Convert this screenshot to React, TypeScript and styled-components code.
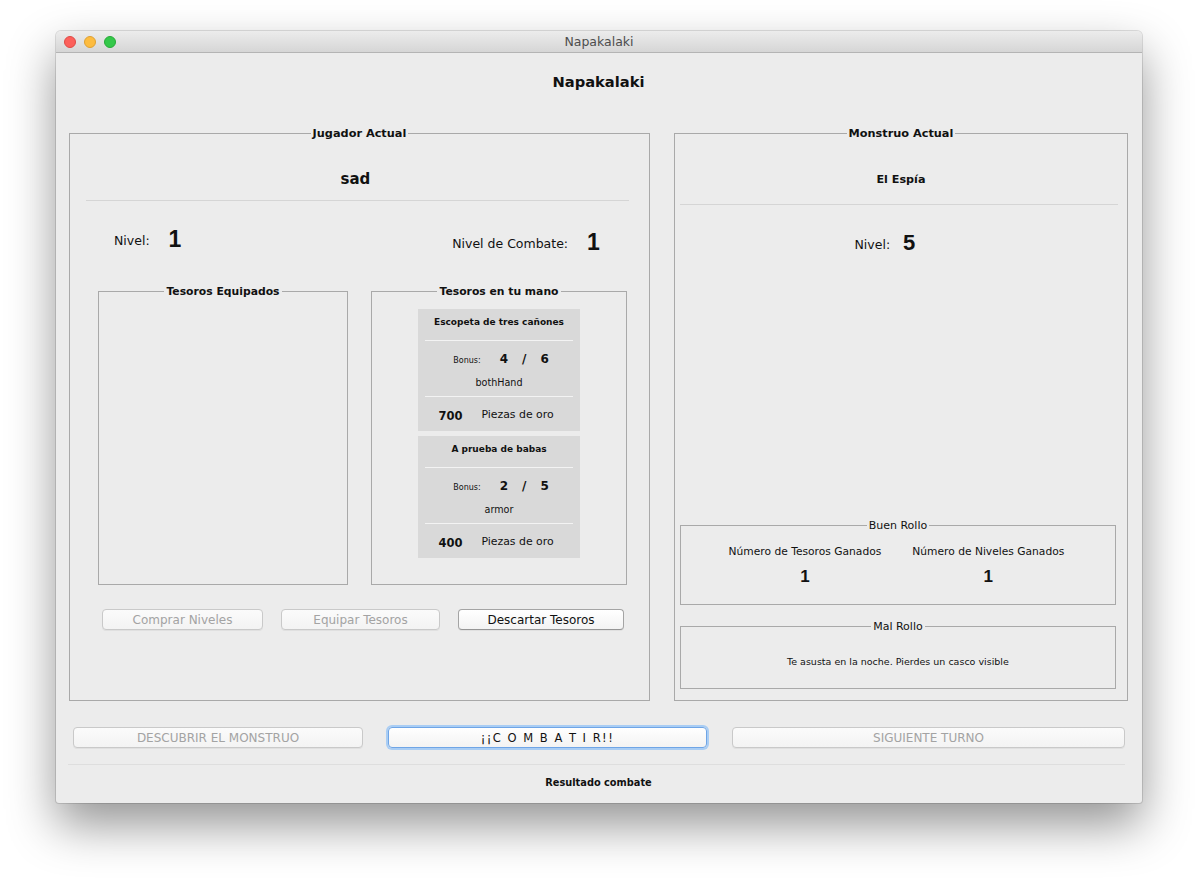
import React from "react";
import styled, { createGlobalStyle } from "styled-components";

const GlobalStyle = createGlobalStyle`
  html, body {
    margin: 0;
    padding: 0;
    background: #ffffff;
  }
  body {
    font-family: "DejaVu Sans", "Liberation Sans", sans-serif;
    color: #111111;
  }
`;

const Desktop = styled.div`
  width: 1198px;
  height: 884px;
  box-sizing: border-box;
  padding: 31px 0 0 56px;
  background: #ffffff;
  overflow: hidden;
`;

const Window = styled.div`
  width: 1086px;
  height: 772px;
  display: flex;
  flex-direction: column;
  border-radius: 5px 5px 3px 3px;
  background: #ececec;
  box-shadow: 0 22px 48px rgba(0, 0, 0, 0.42), 0 0 0 1px rgba(0, 0, 0, 0.12);
  overflow: hidden;
`;

const TitleBar = styled.div`
  height: 22px;
  flex: none;
  box-sizing: border-box;
  display: grid;
  grid-template-columns: 1fr auto 1fr;
  align-items: center;
  background: linear-gradient(#ececec, #d6d6d6);
  border-bottom: 1px solid #b4b4b4;
  font-size: 12.5px;
  color: #4d4d4d;
`;

const Lights = styled.div`
  display: flex;
  gap: 8px;
  padding-left: 8px;
`;

const Light = styled.span<{ $fill: string; $edge: string }>`
  width: 12px;
  height: 12px;
  border-radius: 50%;
  box-sizing: border-box;
  background: ${({ $fill }) => $fill};
  border: 0.5px solid ${({ $edge }) => $edge};
`;

const Content = styled.div`
  flex: 1;
  display: flex;
  flex-direction: column;
  padding: 0 14px 0 13px;
`;

const Heading = styled.div`
  padding-top: 19px;
  height: 20px;
  line-height: 20px;
  text-align: center;
  font-weight: bold;
  font-size: 14.7px;
`;

const PanelRow = styled.div`
  display: flex;
  gap: 24px;
  margin-top: 33px;
`;

const TitledBox = styled.fieldset<{ $w: number; $h: number }>`
  margin: 0;
  padding: 0;
  min-width: 0;
  box-sizing: border-box;
  width: ${({ $w }) => $w}px;
  height: ${({ $h }) => $h}px;
  border: 1px solid #a9a9a9;
  display: flex;
  flex-direction: column;
`;

const Legend = styled.legend<{ $size: number; $bold?: boolean; $lh?: number }>`
  margin: 0 auto;
  padding: 1px 2px 0;
  font-size: ${({ $size }) => $size}px;
  font-weight: ${({ $bold }) => ($bold ? "bold" : "normal")};
  line-height: ${({ $lh }) => $lh ?? 16}px;
  color: #111;
`;

const NameLabel = styled.div<{ $size: number; $top: number; $shift?: number }>`
  margin-top: ${({ $top }) => $top}px;
  padding-right: ${({ $shift }) => $shift ?? 0}px;
  text-align: center;
  font-weight: bold;
  font-size: ${({ $size }) => $size}px;
  line-height: 22px;
  height: 22px;
`;

const Rule = styled.div<{ $m: string }>`
  height: 1px;
  background: #d5d5d5;
  margin: ${({ $m }) => $m};
`;

const LevelRow = styled.div<{ $pad: string; $top: number; $center?: boolean }>`
  display: flex;
  align-items: center;
  justify-content: ${({ $center }) => ($center ? "center" : "space-between")};
  height: 24px;
  margin-top: ${({ $top }) => $top}px;
  padding: ${({ $pad }) => $pad};
`;

const Stat = styled.div<{ $gap: number; $shift?: number }>`
  display: flex;
  align-items: center;
  gap: ${({ $gap }) => $gap}px;
  transform: translateY(${({ $shift }) => $shift ?? 0}px);
`;

const StatLabel = styled.span`
  font-size: 12.5px;
  padding-top: 3px;
`;

const BigNumber = styled.span<{ $size: number }>`
  font-family: "Liberation Sans", Arial, sans-serif;
  font-weight: bold;
  font-size: ${({ $size }) => $size}px;
  line-height: 24px;
`;

const TreasureRow = styled.div`
  display: flex;
  gap: 23px;
  margin-top: 31px;
  padding-left: 28px;
`;

const CardStack = styled.div`
  display: flex;
  flex-direction: column;
  align-items: center;
  gap: 5px;
  margin-top: 9px;
`;

const Card = styled.div`
  width: 162px;
  background: #d9d9d9;
  display: flex;
  flex-direction: column;
`;

const CardTitle = styled.div`
  height: 31px;
  line-height: 27px;
  text-align: center;
  font-weight: bold;
  font-size: 9px;
`;

const CardRule = styled.div`
  height: 1px;
  margin: 0 7px;
  background: #f3f3f3;
`;

const BonusBlock = styled.div`
  height: 55px;
  box-sizing: border-box;
  padding-top: 7px;
  display: flex;
  flex-direction: column;
  align-items: center;
`;

const BonusRow = styled.div`
  height: 22px;
  display: flex;
  align-items: center;
  gap: 14px;
  padding-left: 4px;
`;

const BonusLabel = styled.span`
  font-size: 8px;
  margin-right: 5px;
  padding-top: 2px;
`;

const BonusValue = styled.span`
  font-weight: bold;
  font-size: 12px;
`;

const TypeLabel = styled.div`
  margin-top: 6px;
  height: 14px;
  line-height: 14px;
  font-size: 9.6px;
`;

const GoldRow = styled.div`
  height: 34px;
  box-sizing: border-box;
  padding: 3px 6px 0 0;
  display: flex;
  align-items: center;
  justify-content: center;
  gap: 19px;
`;

const GoldValue = styled.span`
  font-weight: bold;
  font-size: 11.5px;
`;

const GoldLabel = styled.span`
  font-size: 10.9px;
  padding-bottom: 2px;
`;

const ButtonRow = styled.div<{ $gap: number; $pad: string; $top: number }>`
  display: flex;
  gap: ${({ $gap }) => $gap}px;
  padding: ${({ $pad }) => $pad};
  margin-top: ${({ $top }) => $top}px;
`;

const AquaButton = styled.button<{ $w: number; $focus?: boolean; $spaced?: boolean }>`
  width: ${({ $w }) => $w}px;
  height: 21px;
  padding: 0;
  box-sizing: border-box;
  border-radius: 4px;
  font-family: "DejaVu Sans", "Liberation Sans", sans-serif;
  font-size: ${({ $spaced }) => ($spaced ? 11.5 : 12)}px;
  letter-spacing: ${({ $spaced }) => ($spaced ? "1.5px" : "normal")};
  color: #111;
  background: linear-gradient(#ffffff, #f3f3f3);
  border: 1px solid ${({ $focus }) => ($focus ? "#6fa5e6" : "#a4a4a4")};
  border-bottom-color: ${({ $focus }) => ($focus ? "#6fa5e6" : "#959595")};
  box-shadow: ${({ $focus }) =>
    $focus ? "0 0 0 2px #a9cdf4" : "0 1px 0 rgba(0,0,0,0.05)"};

  &:disabled {
    color: #a3a3a3;
    border-color: #c9c9c9;
    background: linear-gradient(#fbfbfb, #f3f3f3);
  }
`;

const Spacer = styled.div`
  flex: 1;
`;

const RolloBox = styled.fieldset<{ $h: number; $m: string }>`
  margin: ${({ $m }) => $m};
  padding: 0;
  min-width: 0;
  box-sizing: border-box;
  height: ${({ $h }) => $h}px;
  border: 1px solid #a9a9a9;
`;

const RewardGrid = styled.div`
  display: grid;
  grid-template-columns: auto auto;
  justify-content: center;
  column-gap: 31px;
  row-gap: 8px;
  margin-top: 12px;
  padding-right: 3px;
`;

const RewardTitle = styled.div`
  font-size: 10.7px;
  line-height: 14px;
  text-align: center;
`;

const RewardValue = styled.div`
  font-family: "Liberation Sans", Arial, sans-serif;
  font-weight: bold;
  font-size: 17px;
  line-height: 20px;
  text-align: center;
`;

const BadText = styled.div`
  margin-top: 21px;
  font-size: 9.5px;
  line-height: 14px;
  text-align: center;
`;

const BottomRule = styled.div`
  height: 1px;
  background: #dedede;
  margin: 16px 3px 0 -1px;
`;

const ResultLabel = styled.div`
  margin-top: 10px;
  line-height: 16px;
  text-align: center;
  font-weight: bold;
  font-size: 9.8px;
`;

type Treasure = { name: string; min: number; max: number; kind: string; gold: number };

const hand: Treasure[] = [
  { name: "Escopeta de tres cañones", min: 4, max: 6, kind: "bothHand", gold: 700 },
  { name: "A prueba de babas", min: 2, max: 5, kind: "armor", gold: 400 },
];

const TreasureCard = ({ t }: { t: Treasure }) => (
  <Card>
    <CardTitle>{t.name}</CardTitle>
    <CardRule />
    <BonusBlock>
      <BonusRow>
        <BonusLabel>Bonus:</BonusLabel>
        <BonusValue>{t.min}</BonusValue>
        <BonusValue>/</BonusValue>
        <BonusValue>{t.max}</BonusValue>
      </BonusRow>
      <TypeLabel>{t.kind}</TypeLabel>
    </BonusBlock>
    <CardRule />
    <GoldRow>
      <GoldValue>{t.gold}</GoldValue>
      <GoldLabel>Piezas de oro</GoldLabel>
    </GoldRow>
  </Card>
);

const App = () => {
  return (
    <Desktop>
      <GlobalStyle />
      <Window>
        <TitleBar>
          <Lights>
            <Light $fill="#fc605b" $edge="#de4a45" />
            <Light $fill="#fdbc40" $edge="#dea032" />
            <Light $fill="#34c84a" $edge="#27aa37" />
          </Lights>
          <span>Napakalaki</span>
          <span />
        </TitleBar>

        <Content>
          <Heading>Napakalaki</Heading>

          <PanelRow>
            <TitledBox $w={582} $h={576}>
              <Legend $size={11.3} $bold>Jugador Actual</Legend>
              <NameLabel $size={15} $top={26} $shift={8}>sad</NameLabel>
              <Rule $m="10px 20px 0 16px" />
              <LevelRow $pad="0 49px 0 44px" $top={27}>
                <Stat $gap={19} $shift={-1}>
                  <StatLabel>Nivel:</StatLabel>
                  <BigNumber $size={23}>1</BigNumber>
                </Stat>
                <Stat $gap={19} $shift={2}>
                  <StatLabel>Nivel de Combate:</StatLabel>
                  <BigNumber $size={23}>1</BigNumber>
                </Stat>
              </LevelRow>

              <TreasureRow>
                <TitledBox $w={250} $h={302}>
                  <Legend $size={10.8} $bold>Tesoros Equipados</Legend>
                </TitledBox>
                <TitledBox $w={256} $h={302}>
                  <Legend $size={10.8} $bold>Tesoros en tu mano</Legend>
                  <CardStack>
                    {hand.map((t, idx) => (
                      <TreasureCard t={t} key={idx} />
                    ))}
                  </CardStack>
                </TitledBox>
              </TreasureRow>

              <ButtonRow $gap={18} $pad="0 0 0 32px" $top={24}>
                <AquaButton $w={161} disabled>Comprar Niveles</AquaButton>
                <AquaButton $w={159} disabled>Equipar Tesoros</AquaButton>
                <AquaButton $w={166}>Descartar Tesoros</AquaButton>
              </ButtonRow>
            </TitledBox>

            <TitledBox $w={455} $h={576}>
              <Legend $size={11.3} $bold>Monstruo Actual</Legend>
              <NameLabel $size={11.2} $top={27}>El Espía</NameLabel>
              <Rule $m="13px 9px 0 5px" />
              <LevelRow $pad="0 32px 0 0" $top={26} $center>
                <Stat $gap={13}>
                  <StatLabel>Nivel:</StatLabel>
                  <BigNumber $size={22}>5</BigNumber>
                </Stat>
              </LevelRow>
              <Spacer />
              <RolloBox $h={87} $m="0 11px 0 5px">
                <Legend $size={11} $lh={14}>Buen Rollo</Legend>
                <RewardGrid>
                  <RewardTitle>Número de Tesoros Ganados</RewardTitle>
                  <RewardTitle>Número de Niveles Ganados</RewardTitle>
                  <RewardValue>1</RewardValue>
                  <RewardValue>1</RewardValue>
                </RewardGrid>
              </RolloBox>
              <RolloBox $h={70} $m="14px 11px 11px 5px">
                <Legend $size={11} $lh={14}>Mal Rollo</Legend>
                <BadText>Te asusta en la noche. Pierdes un casco visible</BadText>
              </RolloBox>
            </TitledBox>
          </PanelRow>

          <ButtonRow $gap={25} $pad="0 0 0 4px" $top={26}>
            <AquaButton $w={290} disabled>DESCUBRIR EL MONSTRUO</AquaButton>
            <AquaButton $w={319} $focus $spaced>¡¡C O M B A T I R!!</AquaButton>
            <AquaButton $w={393} disabled>SIGUIENTE TURNO</AquaButton>
          </ButtonRow>

          <BottomRule />
          <ResultLabel>Resultado combate</ResultLabel>
        </Content>
      </Window>
    </Desktop>
  );
};

export default App;
